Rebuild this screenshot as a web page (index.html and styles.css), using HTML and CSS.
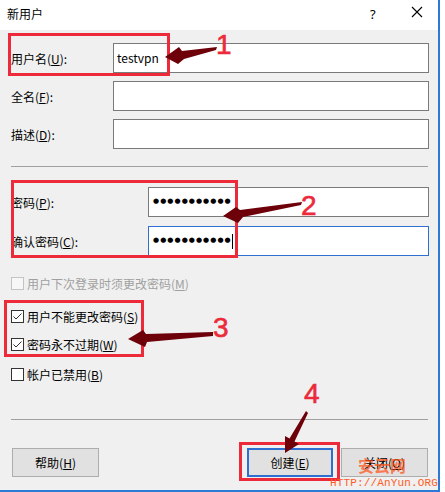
FILE: index.html
```html
<!DOCTYPE html>
<html lang="zh-CN">
<head>
<meta charset="utf-8">
<title>新用户</title>
<link rel="stylesheet" href="styles.css">
</head>
<body>
<div class="window">
  <div class="titlebar">
    <span class="title">新用户</span>
    <span class="tb-help">?</span>
    <span class="tb-close"><svg width="12" height="12" viewBox="0 0 12 12"><path d="M1 1L11 11M11 1L1 11" stroke="#000" stroke-width="1.1" fill="none"/></svg></span>
  </div>
  <div class="body">
    <div class="rows rows-a">
      <div class="row"><span class="lbl">用户名(<u>U</u>):</span><div class="field">testvpn</div></div>
      <div class="row"><span class="lbl">全名(<u>F</u>):</span><div class="field"></div></div>
      <div class="row"><span class="lbl">描述(<u>D</u>):</span><div class="field"></div></div>
    </div>
    <div class="sep sep-1"></div>
    <div class="rows rows-b">
      <div class="row"><span class="lbl">密码(<u>P</u>):</span><div class="field"><span class="dots">●●●●●●●●●●●</span></div></div>
      <div class="row"><span class="lbl">确认密码(<u>C</u>):</span><div class="field focus"><span class="dots">●●●●●●●●●●●</span><span class="caret"></span></div></div>
    </div>
    <div class="checks">
      <div class="check disabled c1"><span class="box"></span><span>用户下次登录时须更改密码(<u>M</u>)</span></div>
      <div class="check c2"><span class="box"><svg width="11" height="11" viewBox="0 0 11 11"><path d="M1.5 5.5L4 8L9.5 2.5" stroke="#333" stroke-width="1" fill="none"/></svg></span><span>用户不能更改密码(<u>S</u>)</span></div>
      <div class="check c3"><span class="box"><svg width="11" height="11" viewBox="0 0 11 11"><path d="M1.5 5.5L4 8L9.5 2.5" stroke="#333" stroke-width="1" fill="none"/></svg></span><span>密码永不过期(<u>W</u>)</span></div>
      <div class="check c4"><span class="box"></span><span>帐户已禁用(<u>B</u>)</span></div>
    </div>
    <div class="sep sep-2"></div>
    <div class="buttons">
      <div class="btn btn-help">帮助(<u>H</u>)</div>
      <div class="spacer"></div>
      <div class="btn btn-create">创建(<u>E</u>)</div>
      <div class="btn btn-close">关闭(<u>O</u>)</div>
    </div>
  </div>

  <div class="mark mark-1"></div>
  <div class="mark mark-2"></div>
  <div class="mark mark-3"></div>
  <div class="mark mark-4"></div>
  <svg class="arrows" width="445" height="492" viewBox="0 0 445 492">
    <g fill="#6d0009">
      <polygon points="165,57 179,47 182,51 217,47 216,50 184,59 178,64"/>
      <polygon points="223,216 236,207 240,210 302,202 301,205 243,217 238,223"/>
      <polygon points="128,339 143,330 146,334 213,332 213,336 147,342 145,347"/>
      <polygon points="285,453 285,436 289.5,438.5 306,411 308,413 294.5,441.5 299,444"/>
    </g>
  </svg>
  <div class="num n1">1</div>
  <div class="num n2">2</div>
  <div class="num n3">3</div>
  <div class="num n4">4</div>
  <div class="wm wm-cn">安云网</div>
  <div class="wm wm-url">HTTP://AnYun.ORG</div>
</div>
</body>
</html>
```
FILE: styles.css
```css
* { box-sizing: border-box; }
html, body { margin: 0; padding: 0; }
body {
  background: #fff;
  font-family: "Noto Sans CJK SC", "Noto Sans", sans-serif;
  font-size: 12px;
  color: #000;
}
u { text-decoration: underline; text-underline-offset: 1px; }

.window {
  position: relative;
  width: 440px;
  height: 492px;
  border-right: 2px solid #2b7bd6;
  border-bottom: 2px solid #2b7bd6;
  display: flex;
  flex-direction: column;
}
.titlebar {
  height: 30px;
  flex: none;
  background: #fff;
  display: flex;
  align-items: center;
  padding-left: 7px;
}
.title { flex: 1; line-height: 16px; margin-top: -3px; }
.tb-help {
  font-family: "Noto Sans", sans-serif;
  font-size: 13px;
  width: 12px;
  margin-right: 29px;
  margin-top: -3px;
}
.tb-close { width: 12px; height: 12px; margin-right: 15px; margin-top: -6px; display: flex; }

.body {
  flex: 1;
  background: #f0f0f0;
  padding: 13px 9px 0 11px;
  display: flex;
  flex-direction: column;
}
.rows { display: flex; flex-direction: column; }
.rows-a { gap: 8px; }
.rows-b { gap: 9px; margin-top: 20px; }
.row { display: flex; align-items: center; height: 30px; }
.rows-a .lbl { width: 102px; }
.rows-b .lbl { width: 137px; }
.lbl { line-height: 16px; margin-top: 1px; }
.field {
  flex: 1;
  height: 30px;
  background: #fff;
  border: 1px solid #7a7a7a;
  padding-left: 3px;
  display: flex;
  align-items: center;
  line-height: 16px;
  font-size: 12px;
}
.field.focus { border-color: #2f6fd2; }
.dots {
  font-family: "DejaVu Sans", sans-serif;
  font-size: 7px;
  letter-spacing: 1.05px;
  margin-left: 1px;
  margin-top: -2px;
}
.caret { display: inline-block; width: 1px; height: 15px; background: #000; margin-left: 0px; }

.sep { height: 1px; background: #a0a0a0; margin-right: 1px; flex: none; }
.sep-1 { margin-top: 17px; }
.sep-2 { margin-top: 38px; }

.checks { display: flex; flex-direction: column; }
.check { display: flex; align-items: center; height: 13px; line-height: 13px; }
.check .box {
  width: 13px; height: 13px;
  border: 1px solid #333;
  background: #fff;
  margin-right: 3px;
  display: flex; align-items: center; justify-content: center;
  flex: none;
}
.check.disabled { color: #a0a0a0; }
.check.disabled .box { border-color: #c4c4c4; background: #f7f7f7; }
.c1 { margin-top: 21px; }
.c2 { margin-top: 20px; }
.c3 { margin-top: 15px; }
.c4 { margin-top: 17px; }

.buttons { display: flex; margin-top: 28px; margin-right: 1px; }
.spacer { flex: 1; }
.btn {
  height: 29px;
  width: 87px;
  background: #e1e1e1;
  border: 1px solid #adadad;
  display: flex; align-items: center; justify-content: center;
  line-height: 16px;
}
.btn-help { margin-left: 1px; }
.btn-create { width: 86px; border: 2px solid #2f6fd2; margin-right: 8px; }

.mark { position: absolute; border: 3px solid #ec2a3a; }
.mark-1 { left: 8px; top: 33px; width: 162px; height: 43px; }
.mark-2 { left: 11px; top: 180px; width: 227px; height: 78px; }
.mark-3 { left: 4px; top: 300px; width: 140px; height: 57px; }
.mark-4 { left: 239px; top: 442px; width: 101px; height: 39px; }

.arrows { position: absolute; left: 0; top: 0; }
.num {
  position: absolute;
  font-family: "Liberation Sans", sans-serif;
  font-size: 28px;
  line-height: 28px;
  color: #ec2a3a;
  -webkit-text-stroke: 0.6px #ec2a3a;
}
.n1 { left: 216px; top: 31px; }
.n2 { left: 301px; top: 192px; }
.n3 { left: 213px; top: 314px; }
.n4 { left: 304px; top: 380px; }

.wm { position: absolute; color: rgba(255, 82, 24, 0.72); }
.wm-cn { left: 358px; top: 455px; font-size: 16px; font-weight: bold; line-height: 20px; }
.wm-url { left: 330px; top: 477px; font-family: "Liberation Mono", monospace; font-size: 11px; line-height: 13px; letter-spacing: 0.15px; color: #ff5c1f; }
```
